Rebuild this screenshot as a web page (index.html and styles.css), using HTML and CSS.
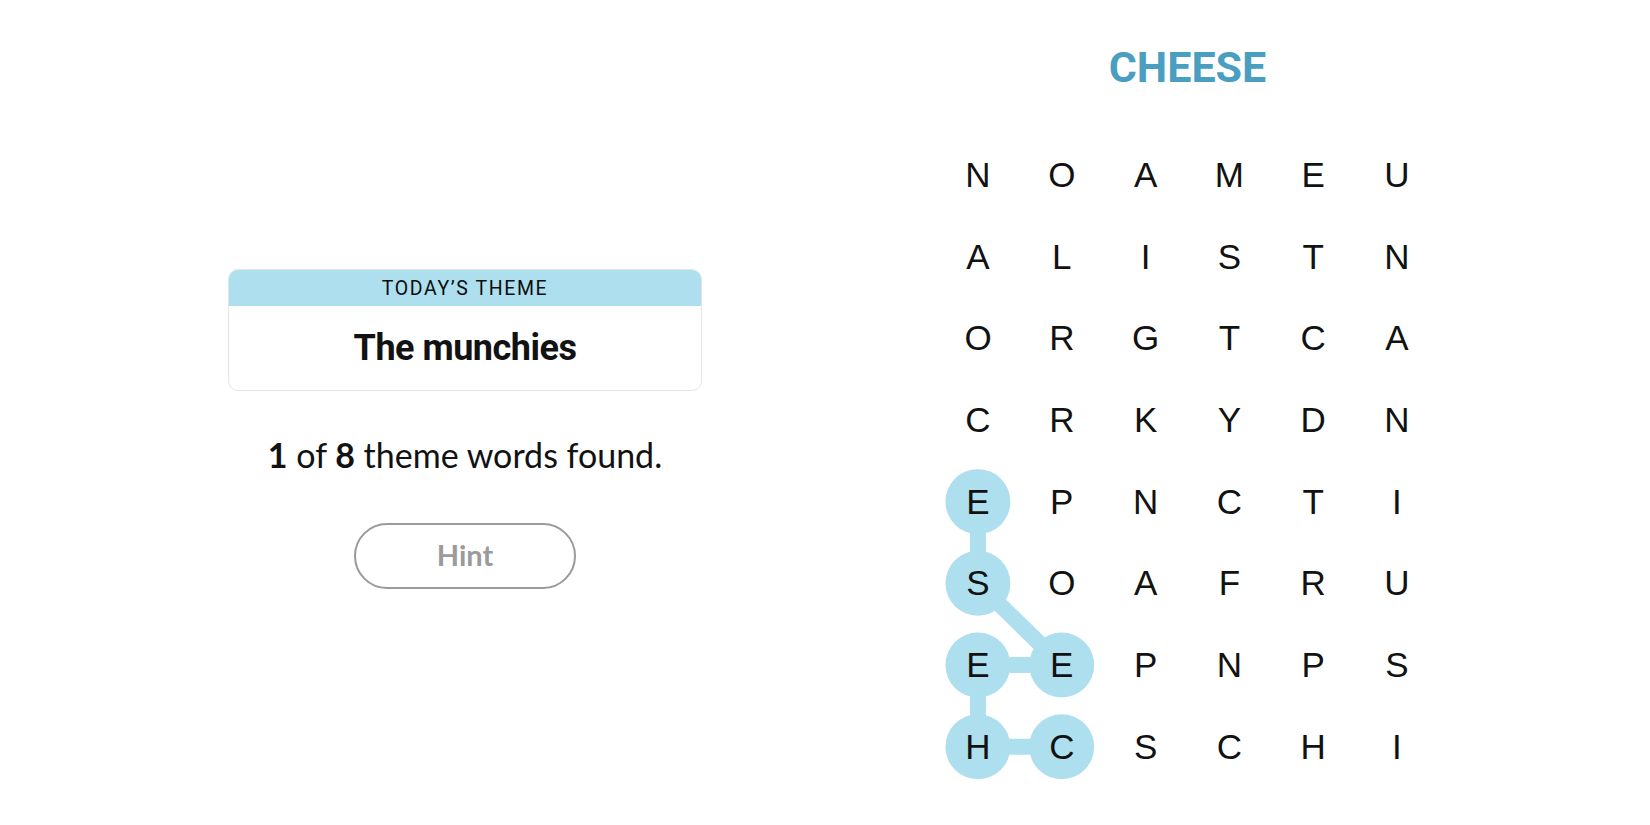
FILE: index.html
```html
<!DOCTYPE html>
<html lang="en">
<head>
<meta charset="utf-8">
<title>Strands</title>
<link rel="stylesheet" href="styles.css">
</head>
<body>
<main class="page">
  <section class="left">
    <div class="theme-card">
      <div class="theme-head">TODAY’S THEME</div>
      <div class="theme-body">The munchies</div>
    </div>
    <p class="found"><b>1</b> of <b>8</b> theme words found.</p>
    <button class="hint" type="button">Hint</button>
  </section>
  <section class="right">
    <h1 class="word">CHEESE</h1>
    <div class="board">
      <svg class="path" viewBox="0 0 502.8 653.6" width="502.8" height="653.6" aria-hidden="true">
        <g stroke="#aedfee" stroke-width="16" stroke-linecap="round" fill="none">
          <line x1="125.7" y1="612.75" x2="41.9" y2="612.75"/>
          <line x1="41.9" y1="612.75" x2="41.9" y2="531.05"/>
          <line x1="41.9" y1="531.05" x2="125.7" y2="531.05"/>
          <line x1="125.7" y1="531.05" x2="41.9" y2="449.35"/>
          <line x1="41.9" y1="449.35" x2="41.9" y2="367.65"/>
        </g>
        <g fill="#aedfee">
          <circle cx="41.9" cy="367.65" r="32.5"/>
          <circle cx="41.9" cy="449.35" r="32.5"/>
          <circle cx="41.9" cy="531.05" r="32.5"/>
          <circle cx="125.7" cy="531.05" r="32.5"/>
          <circle cx="41.9" cy="612.75" r="32.5"/>
          <circle cx="125.7" cy="612.75" r="32.5"/>
        </g>
      </svg>
      <div class="grid">
        <span>N</span><span>O</span><span>A</span><span>M</span><span>E</span><span>U</span>
        <span>A</span><span>L</span><span>I</span><span>S</span><span>T</span><span>N</span>
        <span>O</span><span>R</span><span>G</span><span>T</span><span>C</span><span>A</span>
        <span>C</span><span>R</span><span>K</span><span>Y</span><span>D</span><span>N</span>
        <span>E</span><span>P</span><span>N</span><span>C</span><span>T</span><span>I</span>
        <span>S</span><span>O</span><span>A</span><span>F</span><span>R</span><span>U</span>
        <span>E</span><span>E</span><span>P</span><span>N</span><span>P</span><span>S</span>
        <span>H</span><span>C</span><span>S</span><span>C</span><span>H</span><span>I</span>
      </div>
    </div>
  </section>
</main>
</body>
</html>
```
FILE: styles.css
```css
html, body {
  margin: 0;
  padding: 0;
  background: #ffffff;
}
body {
  width: 1650px;
  height: 825px;
  overflow: hidden;
  font-family: "Liberation Sans", Arial, sans-serif;
  color: #121212;
}
.page {
  display: flex;
  align-items: flex-start;
}
.left {
  width: 930px;
  padding-top: 269px;
  display: flex;
  flex-direction: column;
  align-items: center;
}
.theme-card {
  width: 472px;
  border: 1px solid #e4e4e4;
  border-radius: 10px;
  overflow: hidden;
  background: #fff;
}
.theme-head {
  height: 36px;
  background: #aedfee;
  display: flex;
  align-items: center;
  justify-content: center;
  font-family: Roboto, "Liberation Sans", sans-serif;
  font-weight: 400;
  font-size: 19.5px;
  letter-spacing: 1.6px;
  color: #0d0d0d;
}
.theme-body {
  height: 84px;
  display: flex;
  align-items: center;
  justify-content: center;
  font-family: Roboto, "Liberation Sans", sans-serif;
  font-weight: 700;
  font-size: 36px;
  letter-spacing: -0.5px;
  color: #121212;
}
.found {
  margin: 44px 0 0;
  font-family: Lato, "Liberation Sans", sans-serif;
  font-size: 34px;
  line-height: 40px;
  color: #121212;
}
.found b {
  font-weight: 700;
}
.hint {
  margin-top: 48px;
  width: 222px;
  height: 66px;
  border: 2.5px solid #9a9a9a;
  border-radius: 33px;
  background: #fff;
  font-family: Lato, "Liberation Sans", sans-serif;
  font-weight: 700;
  font-size: 29px;
  color: #9b9b9b;
  padding: 0 0 3px;
}
.right {
  margin-left: 6px;
  width: 503px;
  padding-top: 42px;
  display: flex;
  flex-direction: column;
  align-items: center;
}
.word {
  margin: 0;
  font-family: Roboto, "Liberation Sans", sans-serif;
  font-weight: 700;
  font-size: 43px;
  line-height: 50px;
  color: #4a9fc1;
}
.board {
  position: relative;
  margin-top: 42px;
  width: 502.8px;
  height: 653.6px;
}
.path {
  position: absolute;
  left: 0;
  top: 0;
}
.grid {
  position: relative;
  display: grid;
  grid-template-columns: repeat(6, 83.8px);
  grid-template-rows: repeat(8, 81.7px);
}
.grid span {
  display: flex;
  align-items: center;
  justify-content: center;
  font-family: "Liberation Sans", Arial, sans-serif;
  font-size: 35px;
  color: #121212;
}
```
